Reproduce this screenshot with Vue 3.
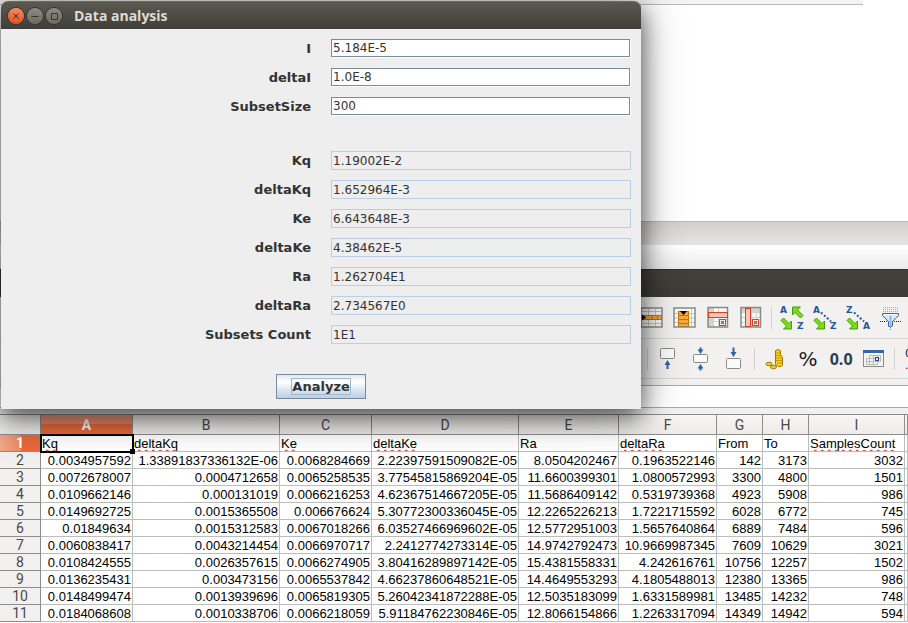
<script setup>
import { ref } from 'vue'

const inputs = ref([
  { id: 'current', label: 'I', value: '5.184E-5' },
  { id: 'delta-i', label: 'deltaI', value: '1.0E-8' },
  { id: 'subset-size', label: 'SubsetSize', value: '300' }
])

const results = [
  { id: 'kq', label: 'Kq', value: '1.19002E-2' },
  { id: 'delta-kq', label: 'deltaKq', value: '1.652964E-3' },
  { id: 'ke', label: 'Ke', value: '6.643648E-3' },
  { id: 'delta-ke', label: 'deltaKe', value: '4.38462E-5' },
  { id: 'ra', label: 'Ra', value: '1.262704E1' },
  { id: 'delta-ra', label: 'deltaRa', value: '2.734567E0' },
  { id: 'subsets', label: 'Subsets Count', value: '1E1' }
]

const columns = [
  { letter: 'A', title: 'Kq', width: 92, misspelt: true },
  { letter: 'B', title: 'deltaKq', width: 147, misspelt: true },
  { letter: 'C', title: 'Ke', width: 92, misspelt: true },
  { letter: 'D', title: 'deltaKe', width: 147, misspelt: true },
  { letter: 'E', title: 'Ra', width: 100, misspelt: false },
  { letter: 'F', title: 'deltaRa', width: 98, misspelt: true },
  { letter: 'G', title: 'From', width: 46, misspelt: false },
  { letter: 'H', title: 'To', width: 46, misspelt: false },
  { letter: 'I', title: 'SamplesCount', width: 96, misspelt: true }
]

const rows = [
  ['0.0034957592', '1.33891837336132E-06', '0.0068284669', '2.22397591509082E-05', '8.0504202467', '0.1963522146', '142', '3173', '3032'],
  ['0.0072678007', '0.0004712658', '0.0065258535', '3.77545815869204E-05', '11.6600399301', '1.0800572993', '3300', '4800', '1501'],
  ['0.0109662146', '0.000131019', '0.0066216253', '4.62367514667205E-05', '11.5686409142', '0.5319739368', '4923', '5908', '986'],
  ['0.0149692725', '0.0015365508', '0.006676624', '5.30772300336045E-05', '12.2265226213', '1.7221715592', '6028', '6772', '745'],
  ['0.01849634', '0.0015312583', '0.0067018266', '6.03527466969602E-05', '12.5772951003', '1.5657640864', '6889', '7484', '596'],
  ['0.0060838417', '0.0043214454', '0.0066970717', '2.2412774273314E-05', '14.9742792473', '10.9669987345', '7609', '10629', '3021'],
  ['0.0108424555', '0.0026357615', '0.0066274905', '3.80416289897142E-05', '15.4381558331', '4.242616761', '10756', '12257', '1502'],
  ['0.0136235431', '0.003473156', '0.0065537842', '4.66237860648521E-05', '14.4649553293', '4.1805488013', '12380', '13365', '986'],
  ['0.0148499474', '0.0013939696', '0.0065819305', '5.26042341872288E-05', '12.5035183099', '1.6331589981', '13485', '14232', '748'],
  ['0.0184068608', '0.0010338706', '0.0066218059', '5.91184762230846E-05', '12.8066154866', '1.2263317094', '14349', '14942', '594']
]
</script>

<template>
  <main class="desktop">
    <div class="back-window">
      <div class="page-edge"></div>
      <div class="page-blank"></div>
      <div class="band band-grey"></div>
      <div class="band band-white"></div>
    </div>

    <section class="calc">
      <div class="calc-title"></div>

      <div class="toolbar toolbar-top">
        <div class="group">
          <button class="tool" aria-label="Insert row">
            <svg viewBox="0 0 24 24">
              <rect x="1" y="2" width="21" height="19" fill="#fafafa" />
              <path d="M1 5.500H22M1 17.500H22M8.500 3V20M15.500 3V20" stroke="#c4c4c0" fill="none" />
              <rect x="1.500" y="9.500" width="20" height="4" fill="#f6a93b" stroke="#c87408" />
              <path d="M12.500 9v5M17.500 9v5" stroke="#c87408" />
              <rect x="1" y="2" width="21" height="19" fill="none" stroke="#888a85" stroke-width="1.500" />
              <path d="M2 8.500l4 3-4 3z" fill="#000" />
            </svg>
          </button>
          <button class="tool" aria-label="Insert column">
            <svg viewBox="0 0 24 24">
              <rect x="1" y="2" width="21" height="19" fill="#fafafa" />
              <path d="M1 7.500H22M1 12H22M1 16.500H22M18.500 3V20" stroke="#c4c4c0" fill="none" />
              <rect x="5.500" y="5.500" width="10" height="15" fill="#f6a93b" stroke="#c87408" />
              <path d="M5 9.500h11M5 13.500h11M5 17.500h11" stroke="#c87408" />
              <rect x="1" y="2" width="21" height="19" fill="none" stroke="#888a85" stroke-width="1.500" />
              <path d="M7 5h7l-3.500 4z" fill="#000" />
            </svg>
          </button>
          <button class="tool" aria-label="Delete row">
            <svg viewBox="0 0 24 24">
              <rect x="2" y="2" width="20" height="19" fill="#f8f8f8" />
              <rect x="2" y="2" width="5" height="19" fill="#d3d3d0" />
              <path d="M2 11.500H22M2 15.500H22M7.500 2V21M12.500 2V21" stroke="#d0d0cd" />
              <rect x="2" y="1.500" width="19.500" height="19.500" fill="none" stroke="#888a85" stroke-width="1.500" />
              <rect x="2.500" y="6.500" width="19" height="5" fill="#f5c5bc" stroke="#dc3f22" />
              <rect x="13.500" y="13.500" width="6" height="6" fill="#fff" stroke="#dc3f22" />
              <path d="M15 15l3 3m0-3l-3 3" stroke="#dc3f22" stroke-width="1.300" />
            </svg>
          </button>
          <button class="tool" aria-label="Delete column">
            <svg viewBox="0 0 24 24">
              <rect x="2" y="2" width="20" height="19" fill="#f8f8f8" />
              <rect x="2" y="2" width="20" height="4" fill="#d3d3d0" />
              <path d="M2 6.500H22M2 11.500H22M2 16.500H22M12.500 2V21M17.500 2V21" stroke="#d0d0cd" />
              <rect x="2" y="1.500" width="19.500" height="19.500" fill="none" stroke="#888a85" stroke-width="1.500" />
              <rect x="6.500" y="2.500" width="5" height="18" fill="#f5c5bc" stroke="#dc3f22" />
              <rect x="13.500" y="13.500" width="6" height="6" fill="#fff" stroke="#dc3f22" />
              <path d="M15 15l3 3m0-3l-3 3" stroke="#dc3f22" stroke-width="1.300" />
            </svg>
          </button>
        </div>
        <span class="separator"></span>
        <div class="group">
          <button class="tool" aria-label="Sort">
            <svg viewBox="0 0 24 24">
              <text x="0" y="7" class="sort-letter">A</text>
              <text x="17" y="23" class="sort-letter">Z</text>
              <path d="M23 9.500l-2.500 2.500-5.500-5.500-2.500 2.500v-8h8l-3 3z" class="sort-arrow" />
              <path d="M1 14.500l2.500-2.500 5.500 5.500 2.500-2.500v8h-8l3-3z" class="sort-arrow" />
            </svg>
          </button>
          <button class="tool" aria-label="Sort ascending">
            <svg viewBox="0 0 24 24">
              <text x="0" y="7" class="sort-letter">A</text>
              <text x="17" y="23" class="sort-letter">Z</text>
              <path d="M8 6.500L18 15.500" class="sort-dots" />
              <path d="M1 14.500l2.500-2.500 5.500 5.500 2.500-2.500v8h-8l3-3z" class="sort-arrow" />
            </svg>
          </button>
          <button class="tool" aria-label="Sort descending">
            <svg viewBox="0 0 24 24">
              <text x="0" y="7" class="sort-letter">Z</text>
              <text x="17" y="23" class="sort-letter">A</text>
              <path d="M8 6.500L18 15.500" class="sort-dots" />
              <path d="M1 14.500l2.500-2.500 5.500 5.500 2.500-2.500v8h-8l3-3z" class="sort-arrow" />
            </svg>
          </button>
          <button class="tool" aria-label="AutoFilter">
            <svg viewBox="0 0 24 24">
              <path d="M4 1.500h15M4 3.500h15M4 5.500h15" stroke="#aaa" stroke-dasharray="1 1" />
              <path d="M1 15.500h22" stroke="#222" stroke-dasharray="1 1" />
              <path d="M3.500 7.500h16v2l-6 6v4.500l-4 .5v-5l-6-6z" fill="#dbe8f6" stroke="#3465a4" />
              <path d="M4.500 8.500h14" stroke="#fff" />
              <path d="M11.500 10v9" stroke="#8fb3dc" stroke-width="2" />
              <path d="M11.500 21v3" stroke="#777" stroke-dasharray="1 1" />
            </svg>
          </button>
        </div>
      </div>

      <div class="toolbar toolbar-bottom">
        <span class="separator"></span>
        <div class="group">
          <button class="tool" aria-label="Align top">
            <svg viewBox="0 0 24 24">
              <rect x="4.500" y="1.500" width="14" height="10" rx="1" class="cell-box" />
              <path d="M11.500 13l3 5h-2v4h-2v-4h-2z" fill="#2f62a6" />
            </svg>
          </button>
          <button class="tool" aria-label="Center vertically">
            <svg viewBox="0 0 24 24">
              <rect x="4.500" y="7.500" width="14" height="8" rx="1" class="cell-box" />
              <path d="M11.500 7l-3-4.500h2v-2h2v2h2zM11.500 17l3 4.500h-2v2h-2v-2h-2z" fill="#2f62a6" />
            </svg>
          </button>
          <button class="tool" aria-label="Align bottom">
            <svg viewBox="0 0 24 24">
              <rect x="4.500" y="11.500" width="14" height="10" rx="1" class="cell-box" />
              <path d="M11.500 10l-3-5h2v-4.500h2v4.500h2z" fill="#2f62a6" />
            </svg>
          </button>
        </div>
        <span class="separator"></span>
        <div class="group">
          <button class="tool" aria-label="Currency format">
            <svg viewBox="0 0 24 24">
              <g fill="#f3cf24" stroke="#a67c00">
                <path d="M12.500 3.500q2.500-2 5 0v5q2 .5 2 2v8q-2.500 2.500-5.500 0l-1.500-1z" />
                <ellipse cx="6" cy="17" rx="3" ry="1.800" />
                <ellipse cx="10.500" cy="20" rx="3" ry="1.800" />
              </g>
              <path d="M13 6h4M13 8.500h4M13 11h6M13 13.500h6M14 16h5" stroke="#c99700" />
            </svg>
          </button>
          <button class="tool percent">%</button>
          <button class="tool decimal">0.0</button>
          <button class="tool" aria-label="Date format">
            <svg viewBox="0 0 24 24">
              <rect x="1.500" y="3.500" width="20" height="16" fill="#f2f2f0" stroke="#888a85" />
              <rect x="1" y="3" width="21" height="3" fill="#3465a4" />
              <path d="M7.500 8.500h11v6h-3v3h-11v-6h3zM4.500 14.500h11M7.500 11.500h11M7.500 11v6M11.500 8v9M15.500 8v7" fill="none" stroke="#b8bab4" />
              <rect x="13.500" y="10.500" width="3" height="3" fill="#dce8f6" stroke="#204a87" />
            </svg>
          </button>
        </div>
        <span class="separator"></span>
        <button class="tool" aria-label="Add decimal place">
          <svg viewBox="0 0 24 24">
            <text x="2" y="10" class="digits">0</text>
            <text x="2" y="22" class="digits">.00</text>
          </svg>
        </button>
      </div>

      <div class="formula-area">
        <input class="formula" aria-label="Input line" />
      </div>

      <table class="sheet">
        <colgroup>
          <col class="col-number" />
          <col v-for="c in columns" :key="c.letter" :style="{ width: c.width + 'px' }" />
          <col />
        </colgroup>
        <thead>
          <tr>
            <th></th>
            <th v-for="(c, i) in columns" :key="c.letter" :class="{ active: i === 0 }">{{ c.letter }}</th>
            <th></th>
          </tr>
        </thead>
        <tbody>
          <tr>
            <th class="active">1</th>
            <td v-for="(c, i) in columns" :key="c.letter" class="title" :class="{ cursor: i === 0 }">
              <span :class="{ misspelt: c.misspelt }">{{ c.title }}</span>
            </td>
            <td></td>
          </tr>
          <tr v-for="(row, r) in rows" :key="r">
            <th>{{ r + 2 }}</th>
            <td v-for="(cell, i) in row" :key="i">{{ cell }}</td>
            <td></td>
          </tr>
        </tbody>
      </table>
    </section>

    <section class="dialog" role="dialog" aria-labelledby="dialog-title">
      <header class="titlebar">
        <button class="control close" aria-label="Close">
          <svg viewBox="0 0 16 16"><path d="M5.500 5.500l5 5m0-5l-5 5" /></svg>
        </button>
        <button class="control" aria-label="Minimize">
          <svg viewBox="0 0 16 16"><path d="M4.500 8.500h7" /></svg>
        </button>
        <button class="control" aria-label="Maximize">
          <svg viewBox="0 0 16 16"><path d="M5.500 5.500h6v6h-6z" /></svg>
        </button>
        <h1 id="dialog-title">Data analysis</h1>
      </header>
      <form class="form" @submit.prevent>
        <div class="fields">
          <div v-for="f in inputs" :key="f.id" class="field">
            <label :for="f.id">{{ f.label }}</label>
            <input :id="f.id" v-model="f.value" type="text" class="editable" />
          </div>
        </div>
        <div class="fields results">
          <div v-for="f in results" :key="f.id" class="field">
            <label :for="f.id">{{ f.label }}</label>
            <input :id="f.id" :value="f.value" type="text" class="readonly" readonly />
          </div>
        </div>
        <button class="analyze" type="submit"><span>Analyze</span></button>
      </form>
    </section>
  </main>
</template>

<style>
body {
  margin: 0;
}
</style>

<style scoped>
* {
  box-sizing: border-box;
}

.desktop {
  position: relative;
  min-height: 100vh;
  overflow: hidden;
  background: #fff;
  font-family: "Liberation Sans", sans-serif;
}

.page-edge {
  width: 95%;
  height: 5px;
  background: #f4f4f3;
  border-bottom: 1px solid #b9b9b7;
}

.page-blank {
  height: 216px;
}

.band {
  height: 24px;
}

.band-grey {
  background: linear-gradient(#d2d0cc, #e6e5e3);
  border-top: 1px solid #bdbbb7;
}

.band-white {
  background: linear-gradient(#fff, #ebebeb);
}

.calc {
  background: #f2f1f0;
}

.calc-title {
  height: 28px;
  background: linear-gradient(#42413c, #3c3b37);
  border-top: 1px solid #32312e;
}

.toolbar {
  display: flex;
  align-items: center;
  gap: 8px;
  border-bottom: 1px solid #d8d6d3;
  overflow: hidden;
}

.toolbar-top {
  height: 42px;
  padding-left: 70.5%;
}

.toolbar-bottom {
  height: 40px;
  padding-left: calc(70.5% + 7px);
}

.group {
  display: flex;
  flex: none;
  gap: 9px;
}

.separator {
  flex: none;
  width: 1px;
  height: 22px;
  background: #d3d1ce;
}

.tool {
  display: flex;
  flex: none;
  align-items: center;
  justify-content: center;
  width: 24px;
  height: 24px;
  padding: 0;
  border: 0;
  background: none;
}

.tool svg {
  width: 24px;
  height: 24px;
  overflow: visible;
}

.percent {
  color: #1a1a1a;
  font: 20px "DejaVu Sans", sans-serif;
}

.decimal {
  color: #2c3e50;
  font: 700 16px "Open Sans", sans-serif;
}

.sort-letter {
  fill: #24559b;
  font: bold 9px "DejaVu Sans", sans-serif;
}

.sort-arrow {
  fill: #7bdc1d;
  stroke: #4a9a06;
}

.sort-dots {
  fill: none;
  stroke: #24559b;
  stroke-width: 2;
  stroke-dasharray: 2 2;
}

.cell-box {
  fill: #fafafa;
  stroke: #888a85;
}

.digits {
  fill: #1a1a1a;
  font: 11px "DejaVu Sans", sans-serif;
}

.formula-area {
  padding: 6px 0;
}

.formula {
  display: block;
  width: 100%;
  height: 23px;
  border: solid #aaa8a5;
  border-width: 1px 0;
  border-radius: 0;
  background: #fff;
}

.sheet {
  width: 100%;
  table-layout: fixed;
  border-collapse: separate;
  border-spacing: 0;
  border-top: 1px solid #8e8d8b;
  background: #fff;
  color: #000;
  font-size: 13px;
  line-height: 15px;
}

.col-number {
  width: 41px;
}

.sheet th {
  padding: 1px 0 0;
  border: solid #8e8d8b;
  border-width: 0 1px 1px 0;
  background: #f1f0ef;
  color: #4a4a4a;
  font-family: Roboto, sans-serif;
  font-size: 14px;
  font-weight: 400;
}

.sheet thead th {
  height: 20px;
  background: linear-gradient(#f7f6f5, #edecea);
}

.sheet thead th.active {
  background: linear-gradient(#f0a083, #ee8a62 45%, #e8693a 50%, #e8693a);
  color: #fff;
  font-weight: 700;
}

.sheet tbody th {
  height: 17px;
}

.sheet tbody th.active {
  background: linear-gradient(90deg, #f2a88c, #ee8a62 50%, #e8693a 55%);
  color: #fff;
  font-weight: 700;
}

.sheet td {
  height: 17px;
  padding: 1px 1px 0 0;
  border: solid #bdbdbd;
  border-width: 0 1px 1px 0;
  overflow: hidden;
  text-align: right;
  white-space: nowrap;
}

.sheet td.title {
  padding: 1px 0 0 1px;
  text-align: left;
}

.sheet td.cursor {
  position: relative;
  overflow: visible;
  outline: 2px solid #000;
  outline-offset: -1px;
}

.cursor::after {
  content: "";
  position: absolute;
  right: -3px;
  bottom: -3px;
  width: 5px;
  height: 5px;
  background: #000;
}

.misspelt {
  text-decoration: underline wavy #e01010 1px;
  text-decoration-skip-ink: none;
  text-underline-offset: 1px;
}

.dialog {
  position: absolute;
  top: 1px;
  left: 1px;
  width: 70.5%;
  border-radius: 7px 7px 0 0;
  background: #eee;
  box-shadow: 0 8px 24px rgba(0, 0, 0, 0.6), 0 4px 48px rgba(0, 0, 0, 0.3);
  color: #333;
  font-family: "DejaVu Sans", sans-serif;
}

.titlebar {
  display: flex;
  align-items: center;
  gap: 3px;
  height: 28px;
  padding: 0 7px;
  border-radius: 7px 7px 0 0;
  border-top: 1px solid #6a6c5c;
  background: linear-gradient(#5b594f, #3f3e39);
}

.titlebar h1 {
  margin: 0 0 0 9px;
  color: #dfdbd2;
  font: 700 14px "Open Sans", sans-serif;
}

.control {
  width: 16px;
  height: 16px;
  padding: 0;
  border: 0;
  border-radius: 50%;
  background: linear-gradient(#8b8a82, #6b6a63);
  box-shadow: 0 0 0 1px #35342f;
}

.control.close {
  background: linear-gradient(#f58a63, #e5501d);
}

.control svg {
  display: block;
  width: 16px;
  height: 16px;
  fill: none;
  stroke: #35342f;
}

.form {
  display: flex;
  flex-direction: column;
  padding: 10px;
}

.fields {
  display: flex;
  flex-direction: column;
  gap: 10px;
}

.results {
  margin-top: 35px;
}

.field {
  display: grid;
  grid-template-columns: 1fr 1fr;
  gap: 20px;
  align-items: start;
  height: 19px;
}

.field label {
  font-size: 13px;
  font-weight: 700;
  line-height: 19px;
  text-align: right;
}

.field input {
  width: 100%;
  min-width: 0;
  height: 19px;
  padding: 0 1px;
  border-radius: 0;
  outline: 0;
  color: #333;
  font: 12px "DejaVu Sans", sans-serif;
}

.field .editable {
  width: calc(100% - 1px);
  height: 18px;
  border: 1px solid #7a8a99;
  background: #fff;
  box-shadow: 1px 1px #fff;
}

.readonly {
  border: 1px solid #b8cfe5;
  background: #eee;
}

.analyze {
  align-self: center;
  width: 90px;
  height: 25px;
  margin-top: 30px;
  padding: 0;
  border: 1px solid #7a8a99;
  border-radius: 0;
  background: linear-gradient(#dde8f3, #fff 30%, #b8cfe5);
  color: #333;
  font: 700 13px "DejaVu Sans", sans-serif;
}

.analyze span {
  display: inline-block;
  border: 1px solid #a3b8cc;
  line-height: 15px;
}
</style>
